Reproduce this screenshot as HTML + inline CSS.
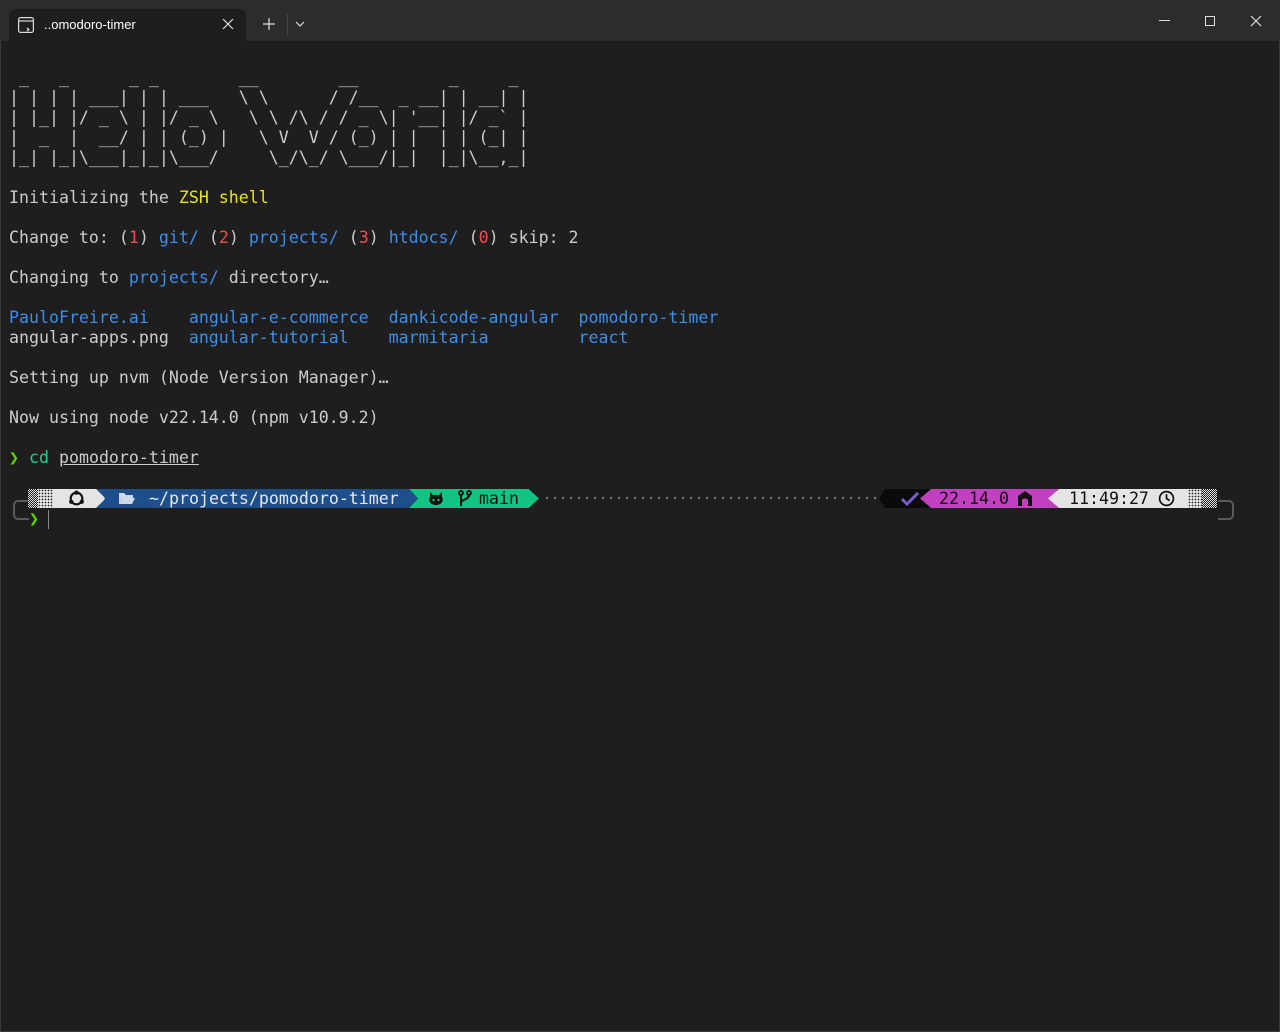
<!DOCTYPE html>
<html><head><meta charset="utf-8"><style>
*{margin:0;padding:0;box-sizing:border-box}
body{width:1280px;height:1032px;background:#1e1e1e;overflow:hidden;position:relative;font-family:"DejaVu Sans Mono","Liberation Mono",monospace;}
.win{position:absolute;inset:0;border:1px solid #3a3a3a;}
.tb{position:absolute;left:0;top:0;width:1280px;height:41px;background:#2c2c2c;}
.tab{position:absolute;left:9px;top:9px;width:237px;height:32px;background:#1e1e1e;border-radius:7px 7px 0 0;}
.tab .t{position:absolute;left:35px;top:8px;font:13px "Liberation Sans",sans-serif;color:#fff;}
.term{position:absolute;left:9px;top:48px;font-size:16.6px;line-height:20px;color:#cccccc;white-space:pre;}
.b{color:#3b8eea}.r{color:#f14c4c}.y{color:#e5e510}.g{color:#23d18b}
.seg{position:absolute;top:489px;height:19px;font-size:16.6px;line-height:19px;white-space:pre;}
</style></head><body>
<div class="win"></div>
<div class="tb">
 <div class="tab">
  <svg style="position:absolute;left:9px;top:8px" width="16" height="16" viewBox="0 0 16 16" fill="none" stroke="#ddd" stroke-width="1.2"><rect x="0.6" y="0.6" width="14.8" height="14.8" rx="2"/><line x1="0.6" y1="4" x2="15.4" y2="4"/><path d="M9 11l2 1.5-2 1.5"/></svg>
  <div class="t">..omodoro-timer</div>
  <svg style="position:absolute;left:213px;top:9px" width="12" height="12" viewBox="0 0 12 12" stroke="#ddd" stroke-width="1.2"><path d="M1 1L11 11M11 1L1 11"/></svg>
 </div>
 <svg style="position:absolute;left:263px;top:18px" width="12" height="12" viewBox="0 0 12 12" stroke="#ddd" stroke-width="1.2"><path d="M6 0V12M0 6H12"/></svg>
 <div style="position:absolute;left:287px;top:14px;width:1px;height:22px;background:#444"></div>
 <svg style="position:absolute;left:295px;top:21px" width="10" height="6" viewBox="0 0 10 6" fill="none" stroke="#ddd" stroke-width="1.2"><path d="M1 1L5 5L9 1"/></svg>
 <div style="position:absolute;left:1159px;top:20px;width:11px;height:1px;background:#ddd"></div>
 <div style="position:absolute;left:1205px;top:16px;width:10px;height:10px;border:1px solid #ddd"></div>
 <svg style="position:absolute;left:1250px;top:15px" width="12" height="12" viewBox="0 0 12 12" stroke="#ddd" stroke-width="1.2"><path d="M1 1L11 11M11 1L1 11"/></svg>
</div>
<div class="term"><span>
 _   _      _ _        __        __         _     _ 
| | | | ___| | | ___   \ \      / /__  _ __| | __| |
| |_| |/ _ \ | |/ _ \   \ \ /\ / / _ \| '__| |/ _` |
|  _  |  __/ | | (_) |   \ V  V / (_) | |  | | (_| |
|_| |_|\___|_|_|\___/     \_/\_/ \___/|_|  |_|\__,_|

Initializing the <span class="y">ZSH shell</span>

Change to: (<span class="r">1</span>) <span class="b">git/</span> (<span class="r">2</span>) <span class="b">projects/</span> (<span class="r">3</span>) <span class="b">htdocs/</span> (<span class="r">0</span>) skip: 2

Changing to <span class="b">projects/</span> directory…

<span class="b">PauloFreire.ai</span>    <span class="b">angular-e-commerce</span>  <span class="b">dankicode-angular</span>  <span class="b">pomodoro-timer</span>
angular-apps.png  <span class="b">angular-tutorial</span>    <span class="b">marmitaria</span>         <span class="b">react</span>

Setting up nvm (Node Version Manager)…

Now using node v22.14.0 (npm v10.9.2)

<span style="color:#5fd700">❯</span> <span class="g">cd</span> <span style="text-decoration:underline">pomodoro-timer</span></span></div>

<!-- corners -->
<div style="position:absolute;left:13px;top:500px;width:16px;height:20px;border:2px solid #5a5a5a;border-right:none;border-radius:5px 0 0 5px"></div>
<div style="position:absolute;left:1218px;top:500px;width:16px;height:20px;border:2px solid #5a5a5a;border-left:none;border-radius:0 5px 5px 0"></div>
<!-- dither left -->
<div style="position:absolute;left:28px;top:489px;width:10px;height:19px;background:repeating-conic-gradient(#e4e4e4 0 25%,#1e1e1e 0 50%) 0 0/2px 2px"></div>
<div style="position:absolute;left:38px;top:489px;width:15px;height:19px;background:#e4e4e4;background-image:radial-gradient(#1e1e1e 35%,transparent 40%);background-size:3px 3px"></div>
<!-- white -->
<div class="seg" style="left:53px;width:52px;background:#e4e4e4;clip-path:polygon(0 0,90% 0,100% 50%,90% 100%,0 100%)"></div>
<svg style="position:absolute;left:68px;top:490px" width="17" height="17" viewBox="0 0 16 16"><circle cx="8" cy="8" r="5.5" fill="none" stroke="#111" stroke-width="2"/><circle cx="8" cy="2.5" r="2" fill="#111"/><circle cx="3" cy="11" r="2" fill="#111"/><circle cx="13" cy="11" r="2" fill="#111"/></svg>
<!-- blue -->
<div class="seg" style="left:96px;width:322px;background:#1c4f8c;clip-path:polygon(0 0,97% 0,100% 50%,97% 100%,0 100%,3% 50%)"></div>
<svg style="position:absolute;left:118px;top:491px" width="18" height="14" viewBox="0 0 18 14"><path d="M1 2h5l2 2h7v3H4L1 13z" fill="#cfd8e8"/><path d="M4 7h13l-3 6H1z" fill="#cfd8e8"/></svg>
<div class="seg" style="left:149px;color:#e8e8e8">~/projects/pomodoro-timer</div>
<!-- green -->
<div class="seg" style="left:409px;width:130px;background:#12c483;clip-path:polygon(0 0,92% 0,100% 50%,92% 100%,0 100%,7% 50%)"></div>
<svg style="position:absolute;left:428px;top:491px" width="16" height="15" viewBox="0 0 16 15"><path d="M2 1l3 3h6l3-3v5c2 3 0 8-6 8S0 9 2 6z" fill="#111"/><circle cx="5.5" cy="9" r="1.2" fill="#12c483"/><circle cx="10.5" cy="9" r="1.2" fill="#12c483"/></svg>
<svg style="position:absolute;left:458px;top:490px" width="14" height="17" viewBox="0 0 14 17" fill="none" stroke="#111" stroke-width="2"><circle cx="3" cy="3" r="2"/><circle cx="11" cy="3" r="2"/><path d="M3 5v11M11 5c0 5-8 4-8 8"/></svg>
<div class="seg" style="left:479px;color:#111">main</div>
<!-- dots -->
<div style="position:absolute;left:543px;top:496px;width:335px;height:4px;background-image:radial-gradient(circle,#777 1px,transparent 1.5px);background-size:8px 4px"></div>
<!-- black -->
<div class="seg" style="left:879px;width:50px;background:#0a0a0a;clip-path:polygon(12% 0,100% 0,100% 100%,12% 100%,0 50%)"></div>
<svg style="position:absolute;left:901px;top:492px" width="18" height="14" viewBox="0 0 18 14" fill="none" stroke="#7a5cd0" stroke-width="3"><path d="M1 7l5 5L17 1"/></svg>
<!-- magenta -->
<div class="seg" style="left:920px;width:140px;background:#c040c0;clip-path:polygon(8% 0,100% 0,100% 100%,8% 100%,0 50%)"></div>
<div class="seg" style="left:939px;color:#111">22.14.0</div>
<svg style="position:absolute;left:1018px;top:491px" width="14" height="15" viewBox="0 0 14 15"><path d="M7 0L14 5V15H10V9C10 7 4 7 4 9V15H0V5z" fill="#111"/></svg>
<!-- light -->
<div class="seg" style="left:1048px;width:140px;background:#e4e4e4;clip-path:polygon(8% 0,100% 0,100% 100%,8% 100%,0 50%)"></div>
<div class="seg" style="left:1069px;color:#111">11:49:27</div>
<svg style="position:absolute;left:1158px;top:490px" width="17" height="17" viewBox="0 0 16 16" fill="none" stroke="#111" stroke-width="1.6"><circle cx="8" cy="8" r="6.5"/><path d="M8 4v4l3 2"/></svg>
<!-- dither right -->
<div style="position:absolute;left:1188px;top:489px;width:14px;height:19px;background:#e4e4e4;background-image:radial-gradient(#1e1e1e 35%,transparent 40%);background-size:3px 3px"></div>
<div style="position:absolute;left:1202px;top:489px;width:15px;height:19px;background:repeating-conic-gradient(#e4e4e4 0 25%,#1e1e1e 0 50%) 0 0/2px 2px"></div>
<!-- prompt line 2 -->
<div class="seg" style="left:29px;top:509px;color:#5fd700;font-weight:bold">❯</div>
<div style="position:absolute;left:48px;top:510px;width:1px;height:19px;background:#888"></div>
</body></html>
